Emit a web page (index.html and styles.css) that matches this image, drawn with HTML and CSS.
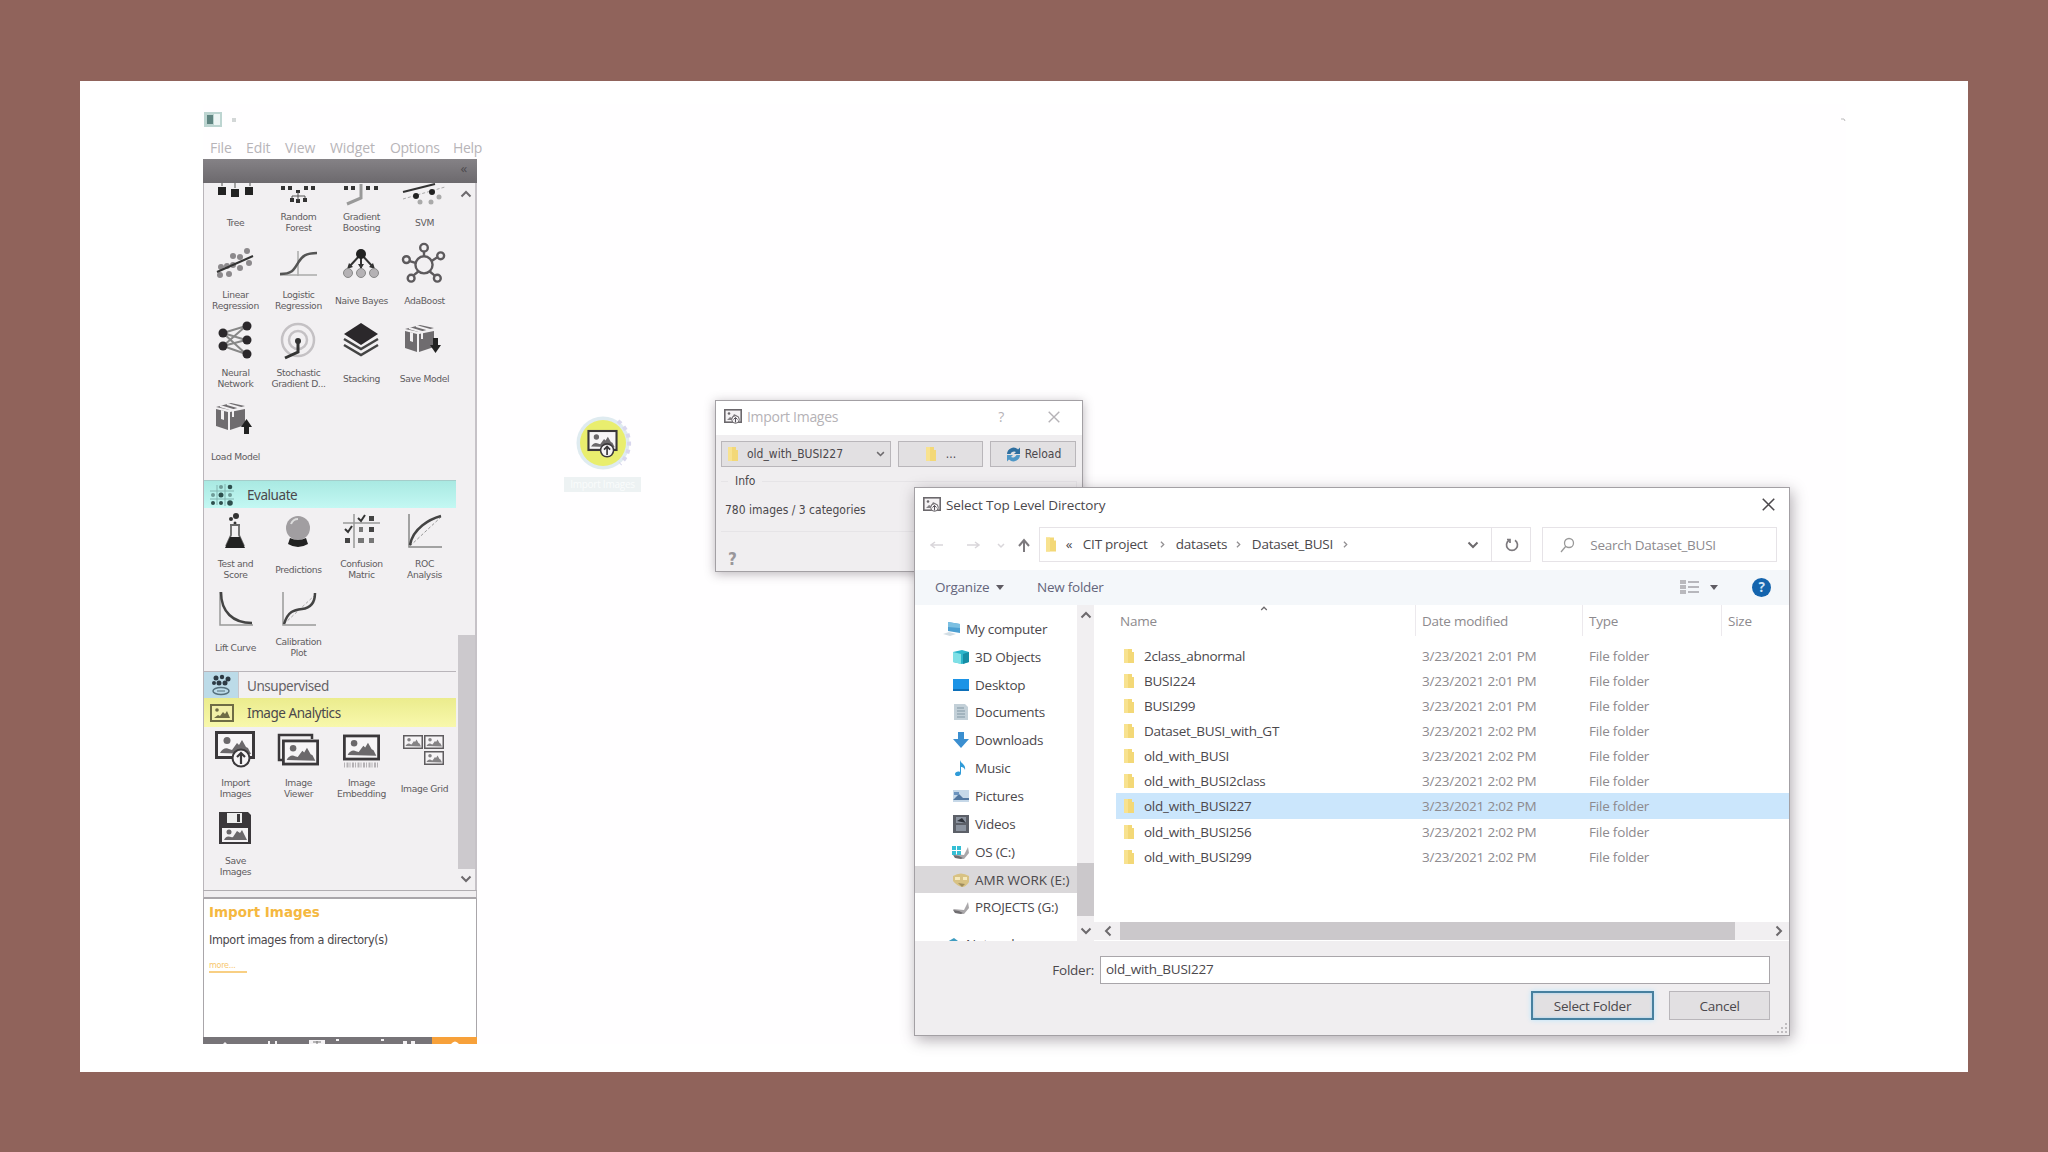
FILE: index.html
```html
<!DOCTYPE html>
<html lang="en">
<head>
    <meta charset="UTF-8">
    <meta name="viewport" content="width=device-width, initial-scale=1.0">
    <title>Import Images</title>
    <link rel="stylesheet" href="styles.css">
</head>
<body>
    <svg class="defs" width="0" height="0">
        <symbol id="pic" viewBox="0 0 40 28">
            <rect x="1.5" y="1.5" width="37" height="25" fill="#f7f5f7" stroke="#3b383b" stroke-width="3"/>
            <circle cx="12" cy="9.500" r="3.500" fill="#6b686b"/>
            <path d="M5 22c2-4 6-6 9-4l3 1 5-7 2 2 3-5 4 7 2 1 3 6z" fill="#6b686b"/>
        </symbol>
        <symbol id="import" viewBox="0 0 42 38">
            <use href="#pic" x="1" y="1" width="40" height="28"/>
            <circle cx="27" cy="28" r="8.500" fill="#f7f5f7" stroke="#3b383b" stroke-width="2"/>
            <path d="M27 34V23m-4 4l4-4 4 4" fill="none" stroke="#3b383b" stroke-width="2.200"/>
        </symbol>
        <symbol id="import-small" viewBox="0 0 18 16">
            <rect x=".8" y=".8" width="16.400" height="12.400" fill="#f4f2f4" stroke="#6b686c" stroke-width="1.600"/>
            <circle cx="5" cy="4.500" r="1.300" fill="#6b686c"/>
            <path d="M3 11l3-3 2 1 2-4 2 1 3 3v2z" fill="#858286"/>
            <circle cx="11.500" cy="10.500" r="3.800" fill="#f4f2f4" stroke="#6b686c"/>
            <path d="M11.500 13.500V8.500m-2 2l2-2 2 2" fill="none" stroke="#55525a"/>
        </symbol>
        <symbol id="box" viewBox="0 0 36 32">
            <path d="M2 8L14 11V29L2 25zM16 11L31 8V24L16 29z" fill="#6f6c6f"/>
            <path d="M2 6L17 2 31 5 16 9z" fill="#6f6c6f"/>
            <path d="M6 5L19 9v7M13 3l14 4" fill="none" stroke="#f2f0f2" stroke-width="2"/>
            <path d="M7 9v9l3 1V10z" fill="#f2f0f2"/>
        </symbol>
        <symbol id="folder" viewBox="0 0 12 16">
            <path d="M1 1h8v3h2v11H1z" fill="#f3d877"/>
            <path d="M1 1h4v14H1z" fill="#f8e28f"/>
        </symbol>
        <symbol id="up" viewBox="0 0 12 8"><path d="M1.500 6.500L6 2l4.500 4.500" fill="none" stroke="#6d6a6d" stroke-width="2"/></symbol>
        <symbol id="down" viewBox="0 0 12 8"><path d="M1.500 1.500L6 6l4.500-4.500" fill="none" stroke="#6d6a6d" stroke-width="2"/></symbol>
        <symbol id="left" viewBox="0 0 8 12"><path d="M6.500 1.500L2 6l4.500 4.500" fill="none" stroke="#6d6a6d" stroke-width="2"/></symbol>
        <symbol id="right" viewBox="0 0 8 12"><path d="M1.500 1.500L6 6l-4.500 4.500" fill="none" stroke="#6d6a6d" stroke-width="2"/></symbol>
        <symbol id="cross" viewBox="0 0 12 12"><path d="M.7.7l10.600 10.600M11.300.7L.7 11.300" fill="none" stroke="currentColor" stroke-width="1.400"/></symbol>
        <symbol id="drive" viewBox="0 0 18 16">
            <path d="M1 10l11 1 4-8 1 6-5 6-8-1z" fill="#aaa8aa"/>
            <path d="M1 11l6 1 4 2-2 1-6-1z" fill="#6f6d70"/>
        </symbol>
    </svg>

    <div class="slide">
        <div class="app">
            <div class="app-title">
                <svg width="18" height="15" viewBox="0 0 18 15"><rect width="18" height="15" fill="#bdd5d1"/><path d="M3 3h6v9H3z" fill="#5f8581"/><path d="M10 2h6v11h-6z" fill="#edf5f4"/></svg>
                <span class="app-mark"></span>
                <svg class="app-min" width="5" height="4" viewBox="0 0 5 4"><path d="M0 1h3l1 2" fill="none" stroke="#bbb"/></svg>
            </div>
            <nav class="menu">
                <span class="m-file">File</span><span class="m-edit">Edit</span><span class="m-view">View</span><span class="m-widget">Widget</span><span class="m-options">Options</span><span class="m-help">Help</span>
            </nav>
            <div class="dock">
                <div class="dock-bar"><span>«</span></div>
                <div class="toolbox">
                    <div class="toolbox-list">
                        <div class="widgets first">
                            <div class="widget"><svg width="40" height="40" viewBox="0 0 40 40"><path d="M20 14v10M7 22v-4h28v4" fill="none" stroke="#888" stroke-width="1.500"/><path d="M3 23h8v8H3zM16 25h8v8h-8zM30 23h8v8h-8z" fill="#222"/></svg><p>Tree</p></div>
                            <div class="widget"><svg width="40" height="40" viewBox="0 0 40 40"><path d="M3 22h4v4H3zM10 22h4v4h-4zM26 22h4v4h-4zM33 22h4v4h-4zM12 34h4v4h-4zM18 35h4v4h-4zM25 34h4v4h-4zM18 26h4v3h-4z" fill="#333"/><path d="M20 28v8m-6-2v-2h13v2" fill="none" stroke="#555"/></svg><p>Random<br>Forest</p></div>
                            <div class="widget"><svg width="40" height="40" viewBox="0 0 40 40"><path d="M3 22h4v4H3zM10 22h4v4h-4zM25 22h4v4h-4zM33 22h4v4h-4z" fill="#333"/><path d="M20 20v14L6 40" fill="none" stroke="#999" stroke-width="3"/></svg><p>Gradient<br>Boosting</p></div>
                            <div class="widget"><svg width="44" height="40" viewBox="0 0 44 40"><path d="M1 28l32-8" stroke="#333" stroke-width="2"/><path d="M1 35l42-12" stroke="#aaa" stroke-dasharray="3 2"/><circle cx="14" cy="32" r="3" fill="#222"/><circle cx="30" cy="28" r="3" fill="#222"/><g fill="#aaa"><circle cx="18" cy="38" r="2.500"/><circle cx="29" cy="38" r="2.500"/><circle cx="37" cy="33" r="2.500"/></g></svg><p>SVM</p></div>

                            <div class="widget"><svg width="40" height="40" viewBox="0 0 40 40"><g fill="#8c898c"><circle cx="6" cy="25" r="3"/><circle cx="5" cy="33" r="3"/><circle cx="14" cy="32" r="3"/><circle cx="12" cy="24" r="3"/><circle cx="18" cy="14" r="3"/><circle cx="25" cy="15" r="3"/><circle cx="32" cy="9" r="3"/><circle cx="25" cy="26" r="3"/><circle cx="34" cy="21" r="3"/><circle cx="18" cy="23" r="3"/></g><path d="M2 30L38 14" stroke="#333" stroke-width="2"/></svg><p>Linear<br>Regression</p></div>
                            <div class="widget"><svg width="40" height="40" viewBox="0 0 40 40"><path d="M2 33h37M20 9v25" stroke="#aaa" stroke-width="1.500"/><path d="M2 32c12 0 14-4 18-11S28 11 39 11" fill="none" stroke="#555" stroke-width="2.500"/></svg><p>Logistic<br>Regression</p></div>
                            <div class="widget"><svg width="40" height="40" viewBox="0 0 40 40"><path d="M20 12L8 25M20 12v14M20 12l12 13" stroke="#333" stroke-width="2"/><circle cx="20" cy="12" r="5" fill="#222"/><g fill="#333"><path d="M6 27l2-6 4 4zM34 27l-2-6-4 4zM20 27l-3-5h6z"/></g><g fill="#b5b2b5" stroke="#888"><circle cx="7" cy="31" r="4.500"/><circle cx="20" cy="31" r="4.500"/><circle cx="33" cy="31" r="4.500"/></g></svg><p>Naive Bayes</p></div>
                            <div class="widget"><svg width="46" height="42" viewBox="0 0 46 42"><g fill="none" stroke="#5d5a5d" stroke-width="2.500"><circle cx="23" cy="24" r="9"/><circle cx="23" cy="6" r="4"/><circle cx="4.500" cy="18.500" r="3.600"/><circle cx="40.500" cy="14.500" r="3.600"/><circle cx="9.500" cy="38" r="3.600"/><circle cx="37" cy="38" r="3.600"/><path d="M23 10v5M8 20l6 2M37 16l-6 4M12 35l5-4M34 35l-5-4"/></g></svg><p>AdaBoost</p></div>

                            <div class="widget"><svg width="40" height="40" viewBox="0 0 40 40"><path d="M8 13L31 6M8 13l23 7M8 13l23 21M8 26L31 6M8 26l23-6M8 26l23 8" stroke="#888" stroke-width="2"/><g fill="#2b282b"><circle cx="8" cy="13" r="4.500"/><circle cx="8" cy="26" r="4.500"/><circle cx="32" cy="6" r="4.500"/><circle cx="32" cy="20" r="4.500"/><circle cx="32" cy="34" r="4.500"/></g></svg><p>Neural<br>Network</p></div>
                            <div class="widget"><svg width="40" height="40" viewBox="0 0 40 40"><g fill="none" stroke="#c4c1c4" stroke-width="2.500"><circle cx="20" cy="20" r="16"/><circle cx="20" cy="20" r="9"/></g><path d="M20 20v12L7 38" fill="none" stroke="#333" stroke-width="3"/><circle cx="20" cy="21" r="3" fill="#333"/></svg><p>Stochastic<br>Gradient D...</p></div>
                            <div class="widget"><svg width="40" height="40" viewBox="0 0 40 40"><path d="M20 3l17 11-17 11L3 14z" fill="#2b282b"/><path d="M3 19l17 10 17-10M3 25l17 10 17-10" fill="none" stroke="#444" stroke-width="2.500"/></svg><p>Stacking</p></div>
                            <div class="widget"><svg width="40" height="40" viewBox="0 0 40 40"><use href="#box" x="-1" y="3" width="36" height="32"/><path d="M29 18h5v7h3l-5.500 8-5.500-8h3z" fill="#222"/></svg><p>Save Model</p></div>

                            <div class="widget"><svg width="40" height="40" viewBox="0 0 40 40"><use href="#box" x="-1" y="3" width="36" height="32"/><path d="M29 36h5v-7h3l-5.500-8-5.500 8h3z" fill="#222"/></svg><p>Load Model</p></div>
                        </div>
                        <div class="category evaluate">
                            <svg width="24" height="22" viewBox="0 0 24 22"><path d="M7 1v20M15 0v22M0 7h24M0 15h24" stroke="#82b5b1"/><g fill="#2d4f4d"><circle cx="11" cy="11" r="2.500"/><circle cx="20" cy="3" r="2.300"/><circle cx="20" cy="19" r="2.800"/><circle cx="3" cy="19" r="2"/><circle cx="11" cy="19" r="2"/></g><g fill="#6f9a97"><circle cx="11" cy="3" r="2"/><circle cx="20" cy="11" r="2"/><circle cx="3" cy="11" r="2"/></g></svg>
                            <span>Evaluate</span>
                        </div>
                        <div class="widgets">
                            <div class="widget"><svg width="40" height="40" viewBox="0 0 40 40"><g fill="#333"><circle cx="21" cy="5" r="3"/><circle cx="16" cy="8" r="2"/><circle cx="20" cy="12" r="1.500"/></g><path d="M16 14v10L11 35M24 14v10l5 11M15 14h10" fill="none" stroke="#666" stroke-width="1.800"/><path d="M15 26h10l5 11H10z" fill="#222"/></svg><p>Test and<br>Score</p></div>
                            <div class="widget"><svg width="40" height="40" viewBox="0 0 40 40"><circle cx="20" cy="17" r="12" fill="#a19ea1"/><path d="M13 13q2-5 7-5" fill="none" stroke="#ddd" stroke-width="2"/><path d="M12 27q8 4 16 0l2 6q-10 6-20 0z" fill="#222"/></svg><p>Predictions</p></div>
                            <div class="widget"><svg width="40" height="40" viewBox="0 0 40 40"><path d="M2 12h37M13 3v34" stroke="#999" stroke-width="1.500"/><path d="M17 7l3 3 4-6M4 18l3 3 4-6" fill="none" stroke="#333" stroke-width="2"/><path d="M28 5h5v5h-5zM4 27h5v5H4zM28 16h5v5h-5z" fill="#444"/><path d="M17 27h6v5h-6zM28 27h5v5h-5zM18 16h4v5h-4z" fill="#777"/></svg><p>Confusion<br>Matric</p></div>
                            <div class="widget"><svg width="40" height="40" viewBox="0 0 40 40"><path d="M5 3v33h33" fill="none" stroke="#888" stroke-width="1.500"/><path d="M6 35L37 6" stroke="#999" stroke-dasharray="3 2"/><path d="M6 34C9 17 26 8 37 5" fill="none" stroke="#444" stroke-width="2.500"/></svg><p>ROC<br>Analysis</p></div>
                            <div class="widget"><svg width="40" height="40" viewBox="0 0 40 40"><path d="M5 3v33h33" fill="none" stroke="#999" stroke-width="1.500"/><path d="M6 3c0 20 12 31 31 31" fill="none" stroke="#444" stroke-width="2.500"/></svg><p>Lift Curve</p></div>
                            <div class="widget"><svg width="40" height="40" viewBox="0 0 40 40"><path d="M5 3v33h33" fill="none" stroke="#999" stroke-width="1.500"/><path d="M6 35L37 6" stroke="#aaa" stroke-dasharray="3 2"/><path d="M6 35C10 22 16 21 24 20 33 19 37 13 37 4" fill="none" stroke="#444" stroke-width="2.500"/></svg><p>Calibration<br>Plot</p></div>
                        </div>
                        <div class="category unsupervised">
                            <div class="tile"><svg width="22" height="22" viewBox="0 0 22 22"><g fill="#2d3a44"><circle cx="5" cy="4" r="2.500"/><circle cx="11" cy="3" r="2.200"/><circle cx="17" cy="5" r="2.500"/><circle cx="8" cy="9" r="2.500"/><circle cx="14" cy="9" r="2.500"/><circle cx="3" cy="9" r="2"/></g><ellipse cx="10" cy="17" rx="8" ry="3.500" fill="none" stroke="#56707d" stroke-width="1.500"/><path d="M6 17h8" stroke="#56707d"/></svg></div>
                            <span>Unsupervised</span>
                        </div>
                        <div class="category analytics">
                            <svg width="24" height="18" viewBox="0 0 24 18"><rect x="1" y="1" width="22" height="16" fill="#f2f0a8" stroke="#6e6c45" stroke-width="2"/><circle cx="7" cy="6" r="1.800" fill="#6e6c45"/><path d="M4 14l4-3 2 1 3-4 2 2 2-3 3 7z" fill="#6e6c45"/></svg>
                            <span>Image Analytics</span>
                        </div>
                        <div class="widgets">
                            <div class="widget"><svg width="42" height="38"><use href="#import" width="42" height="38"/></svg><p>Import<br>Images</p></div>
                            <div class="widget"><svg width="42" height="40" viewBox="0 0 42 40"><path d="M6 30H2V5h33v4" fill="none" stroke="#3b383b" stroke-width="2.500"/><use href="#pic" x="5" y="9" width="37" height="27"/></svg><p>Image<br>Viewer</p></div>
                            <div class="widget"><svg width="40" height="40" viewBox="0 0 40 40"><use href="#pic" x="2" y="4" width="37" height="27"/><path d="M3 35h34" stroke="#b5b2b5" stroke-width="5" stroke-dasharray="1 1.500 2 1"/></svg><p>Image<br>Embedding</p></div>
                            <div class="widget"><svg class="grid-icon" width="42" height="40" viewBox="0 0 42 40"><use href="#pic" x="0" y="5" width="20" height="14"/><use href="#pic" x="21" y="5" width="20" height="14"/><use href="#pic" x="21" y="21" width="20" height="14"/></svg><p>Image Grid</p></div>
                            <div class="widget"><svg width="34" height="34" viewBox="0 0 34 34"><path d="M1 1h29l3 3v29H1z" fill="#3b383b"/><path d="M9 2h15v10H9z" fill="#eee"/><path d="M19 3h3v8h-3z" fill="#3b383b"/><path d="M4 17h26v14H4z" fill="#f5f3f5"/><path d="M6 29c3-6 6-2 9-3l4-6 3 2 2-3 5 10z" fill="#6b686b"/><circle cx="11" cy="21" r="2.500" fill="#6b686b"/></svg><p>Save<br>Images</p></div>
                        </div>
                    </div>
                    <div class="vscroll">
                        <svg width="12" height="8"><use href="#up"/></svg>
                        <div class="thumb"></div>
                        <svg width="12" height="8"><use href="#down"/></svg>
                    </div>
                </div>
                <div class="splitter"></div>
                <div class="help">
                    <h3>Import Images</h3>
                    <p>Import images from a directory(s)</p>
                    <a>more...</a>
                </div>
                <div class="dock-tools">
                    <svg width="229" height="7" viewBox="0 0 229 7"><g fill="#f5f3f5"><path d="M20 7l2-2 2 2zM65 4h2v3h-2zM72 4h2v3h-2zM106 3h16v4h-16zM133 2h3v2h-3zM178 2h3v2h-3zM200 4h4v3h-4zM208 4h4v3h-4z"/></g><path d="M110 5h8M114 4v3" stroke="#777"/></svg>
                    <div class="orange"><svg width="10" height="4" viewBox="0 0 10 4"><path d="M1 4q4-5 8 0" fill="#fff"/></svg></div>
                </div>
            </div>
        </div>
    </div>

    <div class="node">
        <svg width="66" height="54" viewBox="0 0 66 54">
            <circle cx="28" cy="27" r="26.500" fill="#dfebf0"/>
            <circle cx="28" cy="27" r="23" fill="#e9ee6e"/>
            <path d="M43 5a28 28 0 0 1 2 43" fill="none" stroke="#d9d7ee" stroke-width="4" stroke-dasharray="4 4"/>
            <use href="#import" x="11" y="13" width="33" height="29"/>
        </svg>
        <div class="node-name">Import Images</div>
    </div>

    <div class="dialog import">
        <div class="title">
            <svg width="18" height="16"><use href="#import-small"/></svg>
            <span>Import Images</span>
            <b>?</b>
            <svg class="x" width="12" height="12"><use href="#cross"/></svg>
        </div>
        <div class="controls">
            <div class="btn combo">
                <svg width="12" height="16"><use href="#folder"/></svg>
                <span>old_with_BUSI227</span>
                <svg class="chev" width="9" height="6"><use href="#down"/></svg>
            </div>
            <div class="btn browse"><svg width="12" height="16"><use href="#folder"/></svg><span>...</span></div>
            <div class="btn reload">
                <svg width="17" height="17" viewBox="0 0 17 17"><path d="M2 8a6.500 6.500 0 0 1 11-4.500l2-2V8H9l2-2a4 4 0 0 0-5.500 2z" fill="#2f6f9f"/><path d="M15 9a6.500 6.500 0 0 1-11 4.500l-2 2V9h6l-2 2a4 4 0 0 0 5.500-2z" fill="#4f97c6"/></svg>
                <span>Reload</span>
            </div>
        </div>
        <fieldset><legend>Info</legend>780 images / 3 categories</fieldset>
        <div class="q">?</div>
    </div>

    <div class="dialog picker">
        <div class="title">
            <svg width="18" height="16"><use href="#import-small"/></svg>
            <span>Select Top Level Directory</span>
            <svg class="x" width="13" height="13"><use href="#cross"/></svg>
        </div>
        <div class="address-row">
            <div class="history">
                <svg width="100" height="16" viewBox="0 0 100 16"><g fill="none" stroke="#d9d6da" stroke-width="1.500"><path d="M13 8H1m4-3L1 8l4 3M37 8h12m-4-3l4 3-4 3"/><path d="M68 7l3 3 3-3"/></g><path d="M94 15V3m-5 6l5-6 5 6" fill="none" stroke="#7d7a7e" stroke-width="2"/></svg>
            </div>
            <div class="address">
                <svg width="12" height="17"><use href="#folder"/></svg>
                <span class="back">«</span>
                <span class="c1">CIT project</span>
                <svg width="5" height="9"><use href="#right"/></svg>
                <span class="c2">datasets</span>
                <svg width="5" height="9"><use href="#right"/></svg>
                <span class="c3">Dataset_BUSI</span>
                <svg width="5" height="9"><use href="#right"/></svg>
                <svg class="drop" width="12" height="8"><use href="#down"/></svg>
                <div class="refresh"><svg width="14" height="14" viewBox="0 0 14 14"><path d="M10 2.300A5.500 5.500 0 1 1 4 2.300M2 1.500h3v3.500" fill="none" stroke="#7d7a7e" stroke-width="1.700"/></svg></div>
            </div>
            <div class="search">
                <svg width="16" height="16" viewBox="0 0 16 16"><circle cx="10" cy="6" r="4.500" fill="none" stroke="#999" stroke-width="1.300"/><path d="M7 9l-5 6" stroke="#999" stroke-width="1.300"/></svg>
                <span>Search Dataset_BUSI</span>
            </div>
        </div>
        <div class="toolbar">
            <span class="organize">Organize</span><i class="tri"></i>
            <span class="newf">New folder</span>
            <svg class="views" width="19" height="16" viewBox="0 0 19 16"><path d="M0 1h6v4H0zM0 6h6v4H0zM0 11h6v4H0z" fill="#b9b9bd"/><path d="M8 3h11M8 8h11M8 13h11" stroke="#a2a2a8" stroke-width="1.500"/></svg>
            <i class="tri"></i>
            <b class="ask">?</b>
        </div>
        <div class="panes">
            <ul class="tree">
                <li class="root"><svg width="18" height="16" viewBox="0 0 18 16"><path d="M5 1l12 2v9L5 10z" fill="#4da0d2"/><path d="M5 1l12 2v4L5 6z" fill="#7cc0e2"/><path d="M0 13l6-2 7 2-6 2z" fill="#d2dde4"/></svg>My computer</li>
                <li><svg width="18" height="16" viewBox="0 0 18 16"><path d="M1 3l9-2 7 2v10l-7 2-9-2z" fill="#2bb5cb"/><path d="M1 3l8 2v10l-8-2z" fill="#7fe0e6"/><path d="M11 5l6-2v10l-6 2z" fill="#168da5"/></svg>3D Objects</li>
                <li><svg width="18" height="16" viewBox="0 0 18 16"><path d="M1 2h16v12H1z" fill="#1b93e6"/><path d="M1 12h16v2H1z" fill="#0d6fb8"/></svg>Desktop</li>
                <li><svg width="18" height="16" viewBox="0 0 18 16"><path d="M2 0h11l3 3v13H2z" fill="#c3d0d8"/><path d="M5 4h7M5 7h8M5 10h8M5 13h8" stroke="#8197a4"/></svg>Documents</li>
                <li><svg width="18" height="16" viewBox="0 0 18 16"><path d="M6 0h6v7h5l-8 9-8-9h5z" fill="#3b8fd0"/></svg>Downloads</li>
                <li><svg width="18" height="16" viewBox="0 0 18 16"><path d="M8 0c1 4 6 4 5 10-1-3-3-3-4-3v6c0 4-6 4-6 1 0-2 3-3 5-2z" fill="#2f9bd8"/></svg>Music</li>
                <li><svg width="18" height="16" viewBox="0 0 18 16"><path d="M1 2h16v12H1z" fill="#c6d8e8"/><path d="M1 12l6-6 4 4h6v2z" fill="#5277a0"/><path d="M2 4h5v3H2z" fill="#6b93be"/></svg>Pictures</li>
                <li><svg width="18" height="18" viewBox="0 0 18 18"><path d="M1 0h16v18H1z" fill="#5c6068"/><path d="M4 2h10v6H4zM4 10h10v6H4z" fill="#8b939f"/><path d="M5 6l5-3 4 5z" fill="#2f333b"/></svg>Videos</li>
                <li><svg width="18" height="16" viewBox="0 0 18 16"><use href="#drive"/><path d="M0 2h4v4H0zM5 2h4v4H5zM0 7h4v4H0zM5 7h4v4H5z" fill="#35bfd4"/></svg>OS (C:)</li>
                <li class="current"><svg width="18" height="16" viewBox="0 0 18 16"><path d="M1 4q8-5 16 0v6q-3 5-7 5-5-1-9-6z" fill="#d8c283"/><path d="M3 5h5v3H3zM11 5h4v3h-4z" fill="#f5e9bd"/><path d="M6 11l7 1-3 3z" fill="#a08d5c"/></svg>AMR WORK (E:)</li>
                <li><svg width="18" height="16"><use href="#drive"/></svg>PROJECTS (G:)</li>
                <li class="root network"><svg width="18" height="16" viewBox="0 0 18 16"><path d="M4 6l7-4 4 3v9H4z" fill="#3f9cc0"/></svg>Network</li>
            </ul>
            <div class="vscroll">
                <svg width="12" height="8"><use href="#up"/></svg>
                <div class="thumb"></div>
                <svg width="12" height="8"><use href="#down"/></svg>
            </div>
            <div class="files">
                <svg class="sort" width="8" height="5"><use href="#up"/></svg>
                <table>
                    <thead><tr><th class="name">Name</th><th class="date">Date modified</th><th class="type">Type</th><th>Size</th></tr></thead>
                    <tbody>
                        <tr><td><svg width="12" height="16"><use href="#folder"/></svg>2class_abnormal</td><td>3/23/2021 2:01 PM</td><td>File folder</td><td></td></tr>
                        <tr><td><svg width="12" height="16"><use href="#folder"/></svg>BUSI224</td><td>3/23/2021 2:01 PM</td><td>File folder</td><td></td></tr>
                        <tr><td><svg width="12" height="16"><use href="#folder"/></svg>BUSI299</td><td>3/23/2021 2:01 PM</td><td>File folder</td><td></td></tr>
                        <tr><td><svg width="12" height="16"><use href="#folder"/></svg>Dataset_BUSI_with_GT</td><td>3/23/2021 2:02 PM</td><td>File folder</td><td></td></tr>
                        <tr><td><svg width="12" height="16"><use href="#folder"/></svg>old_with_BUSI</td><td>3/23/2021 2:02 PM</td><td>File folder</td><td></td></tr>
                        <tr><td><svg width="12" height="16"><use href="#folder"/></svg>old_with_BUSI2class</td><td>3/23/2021 2:02 PM</td><td>File folder</td><td></td></tr>
                        <tr class="selected"><td><svg width="12" height="16"><use href="#folder"/></svg>old_with_BUSI227</td><td>3/23/2021 2:02 PM</td><td>File folder</td><td></td></tr>
                        <tr><td><svg width="12" height="16"><use href="#folder"/></svg>old_with_BUSI256</td><td>3/23/2021 2:02 PM</td><td>File folder</td><td></td></tr>
                        <tr><td><svg width="12" height="16"><use href="#folder"/></svg>old_with_BUSI299</td><td>3/23/2021 2:02 PM</td><td>File folder</td><td></td></tr>
                    </tbody>
                </table>
                <div class="hscroll">
                    <svg width="8" height="12"><use href="#left"/></svg>
                    <div class="thumb"></div>
                    <svg width="8" height="12"><use href="#right"/></svg>
                </div>
            </div>
        </div>
        <div class="footer">
            <div class="folder-row"><label>Folder:</label><div class="field">old_with_BUSI227</div></div>
            <div class="buttons"><div class="btn primary">Select Folder</div><div class="btn cancel">Cancel</div></div>
            <svg class="grip" width="12" height="12" viewBox="0 0 12 12"><path d="M9 0h2v2H9zM9 4h2v2H9zM9 8h2v2H9zM5 4h2v2H5zM5 8h2v2H5zM1 8h2v2H1z" fill="#c0bdc0"/></svg>
        </div>
    </div>
</body>
</html>
```

FILE: styles.css
```css
* {
    box-sizing: border-box;
}

body {
    margin: 0;
    width: 2048px;
    height: 1152px;
    overflow: hidden;
    padding: 81px 80px 80px;
    background-color: #90635b;
    font-family: "Open Sans", "Noto Sans", sans-serif;
    font-size: 13.5px;
    letter-spacing: -0.25px;
    color: #4b484c;
}

svg {
    display: block;
    flex-shrink: 0;
}

.defs {
    position: absolute;
}

.slide {
    height: 991px;
    background-color: #fff;
    padding: 23px 122px 0 123px;
}

.app {
    background-color: #fffeff;
}

.app-title {
    height: 31px;
    display: flex;
    align-items: center;
    padding-left: 1px;
}

.app-mark {
    width: 4px;
    height: 4px;
    margin-left: 10px;
    background-color: #d3d7d7;
}

.app-min {
    margin-left: auto;
}

.menu {
    height: 24px;
    display: flex;
    align-items: center;
    padding-left: 7px;
    color: #b7b4b8;
    font-size: 14px;
    letter-spacing: -0.1px;
}

.m-file { width: 36px; }
.m-edit { width: 39px; }
.m-view { width: 45px; }
.m-widget { width: 60px; letter-spacing: -0.1px; }
.m-options { width: 63px; letter-spacing: -0.3px; }
.m-help { letter-spacing: -0.3px; }

.dock {
    width: 274px;
}

.dock-bar {
    height: 24px;
    padding: 0 10px;
    background: linear-gradient(#858286, #6c696d);
    color: #4d4a4e;
    text-align: right;
    line-height: 19px;
}

.toolbox {
    height: 708px;
    display: flex;
    border: 1px solid #b9b5ba;
    border-top: 0;
    border-right: 2px solid #c6c2c7;
    background-color: #f2f0f2;
    overflow: hidden;
}

.toolbox-list {
    width: 252px;
    overflow: hidden;
}

.widgets {
    display: grid;
    grid-template-columns: repeat(4, 63px);
    grid-auto-rows: 78px;
}

.widgets.first {
    margin-top: -22px;
    padding-bottom: 7px;
}

.widget {
    display: flex;
    flex-direction: column;
    align-items: center;
}

.widget svg {
    height: 40px;
    margin-top: 3px;
    margin-left: -1px;
    overflow: visible;
}

.widget p {
    display: flex;
    margin: 1px 0 0;
    align-items: center;
    text-align: center;
    font-family: "DejaVu Sans", sans-serif;
    font-size: 9.2px;
    line-height: 11px;
    letter-spacing: -0.35px;
    color: #5f5c60;
    white-space: nowrap;
    height: 37px;
}

.widget .grid-icon {
    opacity: 0.8;
}

.category {
    height: 28px;
    display: flex;
    align-items: center;
    font-family: "Noto Sans", sans-serif;
    font-size: 13.5px;
    letter-spacing: -0.45px;
}

.evaluate {
    background: linear-gradient(#a9e9e2, #c3f8f3);
    border-top: 1px solid #a5cdca;
    padding-left: 6px;
    gap: 13px;
}

.unsupervised {
    margin-top: 7px;
    height: 27px;
    border-top: 1px solid #b9b5ba;
    gap: 8px;
    color: #656266;
}

.unsupervised span {
    padding-top: 2px;
}

.tile {
    width: 35px;
    height: 26px;
    padding: 2px 7px;
    background-color: #bcdbe8;
    border-right: 1px solid #c9c6ca;
}

.analytics {
    height: 29px;
    background: linear-gradient(#ebec8d, #f8f8ac);
    padding-left: 6px;
    gap: 13px;
}

.vscroll {
    display: flex;
    flex-direction: column;
    align-items: center;
}

.toolbox .vscroll {
    width: 18px;
    margin-left: 1px;
    padding: 7px 0;
}

.toolbox .vscroll .thumb {
    width: 17px;
    height: 236px;
    margin-top: 437px;
    margin-bottom: 6px;
    background-color: #ccc9cd;
}

.splitter {
    height: 8px;
    background-color: #f0eef0;
    border: 1px solid #b9b5ba;
    border-bottom: 2px solid #a9a6aa;
    border-top: 0;
    box-shadow: 0 -1px #b0adb1;
}

.help {
    height: 138px;
    padding: 3px 5px;
    background-color: #fff;
    border: 1px solid #a9a6aa;
    border-width: 0 1px;
    font-family: "DejaVu Sans", sans-serif;
}

.help h3 {
    margin: 0;
    font-size: 13.5px;
    line-height: 20px;
    letter-spacing: 0;
    color: #f5b840;
}

.help p {
    margin: 10px 0 13px;
    font-family: "DejaVu Sans Condensed", "DejaVu Sans", sans-serif;
    font-size: 12.5px;
    line-height: 16px;
    letter-spacing: -0.35px;
}

.help a {
    display: block;
    width: 38px;
    height: 12px;
    font-size: 8px;
    line-height: 10px;
    color: #f7c76c;
    border-bottom: 2px solid #f8cf83;
}

.dock-tools {
    height: 7px;
    display: flex;
    background-color: #777478;
}

.orange {
    width: 45px;
    padding: 3px 18px 0;
    background-color: #f7a13a;
}

.node {
    position: absolute;
    left: 564px;
    top: 416px;
    width: 77px;
}

.node svg {
    margin-left: 11px;
}

.node-name {
    margin-top: 7px;
    height: 15px;
    background-color: #edf2f3;
    color: #fafcfc;
    font-size: 10px;
    line-height: 14px;
    text-align: center;
}

.dialog {
    position: absolute;
    border: 1px solid #a3a0a4;
    background-color: #f0eef0;
}

.title {
    display: flex;
    align-items: center;
    background-color: #fff;
}

.import {
    left: 715px;
    top: 400px;
    width: 368px;
    height: 172px;
    box-shadow: 0 2px 10px rgba(60, 50, 60, 0.35);
    font-family: "DejaVu Sans Condensed", "DejaVu Sans", sans-serif;
    font-size: 12px;
    letter-spacing: 0;
}

.import .title {
    height: 34px;
    padding: 0 22px 3px 8px;
    gap: 5px;
    color: #b5b2b6;
    font-family: "Open Sans", sans-serif;
    font-size: 14px;
    letter-spacing: -0.3px;
}

.import .title b {
    margin-left: auto;
    font-weight: 400;
}

.import .x {
    margin-left: 39px;
}

.controls {
    display: flex;
    padding: 6px 6px 0 5px;
}

.btn {
    display: flex;
    align-items: center;
    justify-content: center;
    background-color: #e2e0e2;
    border: 1px solid #b9b6ba;
}

.import .btn {
    height: 26px;
}

.combo {
    width: 170px;
    padding: 0 5px;
}

.combo span {
    margin-left: 8px;
}

.combo .chev {
    margin-left: auto;
}

.browse {
    width: 85px;
    margin: 0 7px;
    gap: 9px;
}

.reload {
    width: 86px;
    gap: 3px;
}

fieldset {
    margin: 7px 5px 0;
    height: 58px;
    padding: 15px 4px 0;
    border: 1px solid #e6e4e7;
    border-left: 0;
}

legend {
    padding: 0 7px;
    margin-left: 3px;
}

.q {
    margin: 17px 0 0 12px;
    font-size: 17px;
    line-height: 20px;
    font-weight: 700;
    color: #99969a;
}

.picker {
    left: 914px;
    top: 487px;
    width: 876px;
    height: 549px;
    display: flex;
    flex-direction: column;
    box-shadow: 2px 4px 14px rgba(60, 50, 60, 0.4);
}

.picker .title {
    height: 35px;
    padding: 0 14px 2px 8px;
    gap: 5px;
    letter-spacing: -0.1px;
}

.picker .x {
    margin-left: auto;
}

.address-row {
    height: 47px;
    display: flex;
    padding: 4px 12px 8px 0;
    background-color: #fff;
}

.history {
    width: 124px;
    padding: 10px 0 0 15px;
}

.address,
.search {
    display: flex;
    align-items: center;
    border: 1px solid #e6e3e7;
}

.address {
    width: 493px;
    padding-left: 5px;
}

.address span {
    margin-top: -1px;
}

.address span + svg {
    opacity: 0.75;
}

.back { width: 26px; padding-left: 9px; }
.c1 { width: 77px; }
.c2 { width: 60px; }
.c3 { width: 91px; }
.address .c2, .address .c3 { margin-left: 11px; }

.address .drop {
    margin-left: auto;
    margin-right: 12px;
}

.refresh {
    width: 39px;
    height: 100%;
    padding: 10px 13px;
    border-left: 1px solid #e6e3e7;
}

.search {
    width: 235px;
    margin-left: 11px;
    padding-left: 16px;
    gap: 15px;
    color: #8d8a8e;
}

.toolbar {
    height: 35px;
    display: flex;
    align-items: center;
    padding: 0 18px 1px 20px;
    background-color: #f4f7fa;
    color: #63657a;
}

.organize { width: 61px; }
.newf { margin-left: 33px; }

.tri {
    border: 4px solid transparent;
    border-top: 5px solid #5f5c63;
    border-bottom: 0;
}

.views {
    margin-left: auto;
    margin-right: 11px;
}

.ask {
    width: 19px;
    height: 19px;
    margin-left: 34px;
    border-radius: 50%;
    background-color: #1464ad;
    color: #cfe5f7;
    line-height: 19px;
    text-align: center;
}

.panes {
    height: 336px;
    display: flex;
    background-color: #fff;
}

.tree {
    width: 162px;
    margin: 0;
    padding: 10px 0 0;
    overflow: hidden;
    list-style: none;
}

.tree li {
    height: 27.850px;
    display: flex;
    align-items: center;
    gap: 5px;
    padding-left: 37px;
    white-space: nowrap;
}

.tree li.root {
    padding-left: 28px;
}

.tree li.network {
    margin-top: 9px;
}

.tree .current {
    background-color: #dad8da;
    letter-spacing: 0;
}

.panes .vscroll {
    width: 17px;
    padding: 6px 0;
    background-color: #f1eff1;
}

.panes .vscroll .thumb {
    width: 17px;
    height: 54px;
    margin-top: 244px;
    margin-bottom: 11px;
    background-color: #cbc8cb;
}

.files {
    width: 695px;
    position: relative;
    display: flex;
    flex-direction: column;
}

.sort {
    position: absolute;
    left: 166px;
    top: 1px;
}

table {
    width: 673px;
    margin-left: 22px;
    border-collapse: separate;
    border-spacing: 0;
    table-layout: fixed;
}

th {
    height: 31px;
    padding: 0 0 0 6px;
    font-weight: 400;
    text-align: left;
    color: #8d8a8e;
    border-left: 1px solid #ece9ed;
}

/* gap between the column headers and the first row */
tbody::before {
    content: "";
    display: block;
    height: 7px;
}

th.name {
    width: 299px;
    padding-left: 4px;
    border-left: 0;
}

th.date { width: 167px; }
th.type { width: 139px; }

td {
    height: 25px;
    padding: 0 0 0 7px;
    line-height: 18px;
    letter-spacing: -0.2px;
    color: #8d8a8e;
}

td:first-child {
    letter-spacing: -0.25px;
    color: #4b484c;
}

td svg {
    float: left;
    margin: 1px 9px 0 0;
}

.selected {
    background-color: #cbe6fc;
}

.selected td {
    height: 26px;
}

.hscroll {
    height: 18px;
    margin-top: auto;
    margin-bottom: 1px;
    display: flex;
    align-items: center;
    padding: 0 6px 0 10px;
    background-color: #f1eff1;
}

.hscroll .thumb {
    width: 615px;
    height: 18px;
    margin: 0 auto 0 8px;
    background-color: #cbc8cb;
}

.footer {
    flex: 1;
    position: relative;
    padding: 15px 19px 0 0;
}

.folder-row {
    height: 28px;
    display: flex;
    align-items: center;
    justify-content: flex-end;
    gap: 6px;
}

.field {
    width: 670px;
    height: 28px;
    padding: 0 5px;
    line-height: 24px;
    background-color: #fff;
    border: 1px solid #a9a6aa;
}

.buttons {
    display: flex;
    justify-content: flex-end;
    gap: 15px;
    margin-top: 7px;
}

.buttons .btn {
    height: 29px;
}

.primary {
    width: 123px;
    border: 2px solid #47809f;
    box-shadow: 0 0 5px #b8e6ff, inset 0 0 3px #9bd4f5;
}

.cancel {
    width: 101px;
}

.grip {
    position: absolute;
    right: 1px;
    bottom: 0;
}
```
